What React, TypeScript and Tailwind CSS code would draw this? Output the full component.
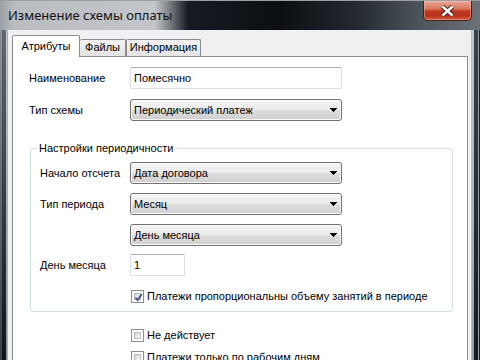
const ui = "font-['Liberation_Sans',Arial,sans-serif] text-[11px] leading-[13px] text-black";

function Arrow() {
  return (
    <svg width="7" height="4" viewBox="0 0 7 4" className="mr-[4px] shrink-0">
      <path d="M0 0h7v1H0zM1 1h5v1H1zM2 2h3v1H2zM3 3h1v1H3z" fill="#000" />
    </svg>
  );
}

function Combo({ value }: { value: string }) {
  return (
    <div className="flex h-[22px] w-[212px] items-center justify-between rounded-[3px] border border-[#707070] bg-[linear-gradient(180deg,#f4f4f4_0%,#ebebeb_48%,#dddddd_52%,#cfcfcf_100%)] shadow-[inset_0_0_0_1px_#fbfbfb]">
      <span className="pl-[3px]">{value}</span>
      <Arrow />
    </div>
  );
}

function TextBox({ value, width }: { value: string; width: string }) {
  return (
    <div
      className={`flex h-[22px] ${width} items-center rounded-[2px] border border-[#dbdfe6] border-t-[#abadb3] bg-white pl-[3px]`}
    >
      {value}
    </div>
  );
}

function Check({ checked, label }: { checked?: boolean; label: string }) {
  return (
    <div className="ml-[1px] flex h-[14px] items-center gap-[3px]">
      <div className="flex h-[13px] w-[13px] items-center justify-center border border-[#8e8f8f] bg-white p-[2px]">
        <div className="relative h-full w-full border border-[#b9bcc0] bg-[linear-gradient(135deg,#cfd2d6_0%,#e9eaec_60%,#f7f7f7_100%)]">
          {checked && (
            <svg width="11" height="11" viewBox="0 0 11 11" className="absolute -left-[2px] -top-[2px]">
              <path d="M2.5 5.5L4.6 8.2L8.8 2" fill="none" stroke="#3b4f8f" strokeWidth="1.8" />
            </svg>
          )}
        </div>
      </div>
      <span>{label}</span>
    </div>
  );
}

export default function App() {
  return (
    <div className={`${ui} flex h-[360px] w-[480px] flex-col overflow-hidden bg-[#141a21]`}>
      <div className="flex h-[30px] shrink-0 items-start border-t border-[#9aa0a6] bg-[linear-gradient(90deg,#9aa0a6_0px,#b9bdc2_14px,#c2c6ca_155px,#6b7177_172px,#151b21_188px,#0b0f14_280px,#252b32_360px,#4f555c_420px,#6b7177_480px)]">
        <span className="ml-[8px] mt-[6px] font-['Noto_Sans',sans-serif] text-[13px] leading-[16px] text-[#111]">
          Изменение схемы оплаты
        </span>
        <div className="ml-auto mr-[8px] flex h-[20px] w-[49px] items-center justify-center rounded-b-[5px] border border-t-0 border-[#4a1d16] bg-[linear-gradient(180deg,#e7a898_0%,#d87a63_40%,#c43a22_52%,#b5301b_75%,#d4583c_100%)] shadow-[inset_0_0_0_1px_rgba(255,200,180,0.45)]">
          <svg width="15" height="12" viewBox="0 0 15 12">
            <path d="M2.5 1.5L12.5 10.5M12.5 1.5L2.5 10.5" stroke="#3a1510" strokeWidth="4.4" />
            <path d="M2.5 1.5L12.5 10.5M12.5 1.5L2.5 10.5" stroke="#fff" strokeWidth="2.6" />
          </svg>
        </div>
      </div>

      <div className="flex min-h-0 flex-1">
        <div className="flex w-[8px] shrink-0">
          <div className="w-[2px] bg-[linear-gradient(180deg,#8c9298,#3a4048)]" />
          <div className="w-[4px] bg-[linear-gradient(180deg,#62686e,#0e1318)]" />
          <div className="w-[1px] bg-[linear-gradient(180deg,#c9cdd1,#8a9096)]" />
          <div className="w-[1px] bg-[#a8acb0]" />
        </div>

        <div className="flex w-[463px] shrink-0 flex-col bg-[#f0f0f0] pt-[5px]">
          <div className="flex h-[21px] items-end pl-[4px]">
            <div className="relative z-10 -mb-px flex h-[22px] w-[68px] justify-center rounded-t-[2px] border border-b-0 border-[#898c95] bg-white pt-[4px]">
              Атрибуты
            </div>
            <div className="flex h-[17px] w-[46px] justify-center rounded-t-[2px] border border-b-0 border-l-0 border-[#898c95] bg-[linear-gradient(180deg,#f2f2f2,#e3e3e3)] pt-[1px]">
              Файлы
            </div>
            <div className="flex h-[17px] w-[75px] justify-center rounded-t-[2px] border border-b-0 border-[#898c95] bg-[linear-gradient(180deg,#f2f2f2,#e3e3e3)] pt-[1px]">
              Информация
            </div>
          </div>

          <div className="ml-[4px] mr-[3px] flex flex-1 flex-col border border-b-0 border-[#898c95] bg-white pt-[10px]">
            <div className="flex items-center pl-[16px]">
              <span className="w-[101px]">Наименование</span>
              <TextBox value="Помесячно" width="w-[212px]" />
            </div>
            <div className="mt-[10px] flex items-center pl-[16px]">
              <span className="w-[101px]">Тип схемы</span>
              <Combo value="Периодический платеж" />
            </div>

            <div className="ml-[17px] mr-[14px] mt-[27px] flex flex-col rounded-[3px] border border-[#d5dfe5] pb-[8px] pl-[9px]">
              <div className="-mt-[8px] ml-[-3px] w-fit bg-white px-[2px] leading-[14px]">
                Настройки периодичности
              </div>
              <div className="mt-[7px] flex items-center">
                <span className="w-[90px]">Начало отсчета</span>
                <Combo value="Дата договора" />
              </div>
              <div className="mt-[9px] flex items-center">
                <span className="w-[90px]">Тип периода</span>
                <Combo value="Месяц" />
              </div>
              <div className="mt-[9px] flex items-center">
                <span className="w-[90px]" />
                <Combo value="День месяца" />
              </div>
              <div className="mt-[8px] flex items-center">
                <span className="w-[90px]">День месяца</span>
                <TextBox value="1" width="w-[55px]" />
              </div>
              <div className="mt-[13px] flex items-center">
                <span className="w-[90px]" />
                <Check checked label="Платежи пропорциональны объему занятий в периоде" />
              </div>
            </div>

            <div className="mt-[16px] flex pl-[117px]">
              <Check label="Не действует" />
            </div>
            <div className="mt-[8px] flex pl-[117px]">
              <Check label="Платежи только по рабочим дням" />
            </div>
          </div>
        </div>

        <div className="flex flex-1">
          <div className="w-[1px] bg-[#b8bcc0]" />
          <div className="w-[2px] bg-[linear-gradient(180deg,#c4c8cc,#9aa0a6)]" />
          <div className="w-[4px] bg-[linear-gradient(180deg,#3a424c,#141b24)]" />
          <div className="w-[1px] bg-[#9aa0a8]" />
          <div className="flex-1 bg-[#1a1f26]" />
        </div>
      </div>
    </div>
  );
}
